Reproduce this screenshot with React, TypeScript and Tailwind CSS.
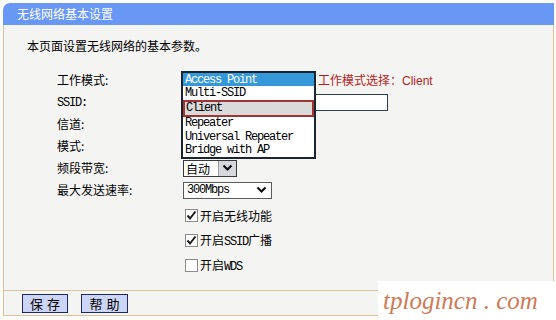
import React from "react";

const CJK = { fontFamily: '"Noto Sans CJK SC", "Liberation Sans", sans-serif' };
const MONO = { fontFamily: '"Liberation Mono", "Noto Sans CJK SC", monospace' };

function M({ children }: { children: React.ReactNode }) {
  return (
    <span className="text-[12px] tracking-[-1.2px]" style={MONO}>
      {children}
    </span>
  );
}

function Chevron() {
  return (
    <svg width="11" height="8" viewBox="0 0 11 8">
      <polyline points="1.5,1.5 5.5,5.5 9.5,1.5" fill="none" stroke="#111" strokeWidth="2.2" />
    </svg>
  );
}

function Check({ checked }: { checked: boolean }) {
  return (
    <div className="w-[13px] h-[13px] border border-[#8c8c8c] bg-white flex items-center justify-center">
      {checked && (
        <svg width="11" height="11" viewBox="0 0 11 11">
          <polyline points="1.5,5.5 4,8.5 9.5,1.5" fill="none" stroke="#1a1a1a" strokeWidth="2" />
        </svg>
      )}
    </div>
  );
}

function Row({ label, children }: { label: React.ReactNode; children?: React.ReactNode }) {
  return (
    <div className="h-[22px] flex items-center">
      <div className="w-[124px] text-[12px] leading-none text-black">{label}</div>
      <div className="flex items-center">{children}</div>
    </div>
  );
}

export default function App() {
  const items = ["Multi-SSID", "Client", "Repeater", "Universal Repeater", "Bridge with AP"];
  return (
    <div className="w-[556px] h-[320px] bg-[#fdfbf6] relative overflow-hidden" style={CJK}>
      <div className="ml-[3px] pt-[3px] w-[551px]">
        <div className="h-[22px] bg-[#6897f5] rounded-tl-[7px] text-white text-[12px] pl-[14px] flex items-center">
          无线网络基本设置
        </div>
        <div className="relative border-l border-r border-[#d9c29c] bg-[#f4f4f2] h-[265px]">
          <div className="pt-[12px] pl-[23px] h-[30px] flex items-center text-[12px] text-black">
            本页面设置无线网络的基本参数。
          </div>
          <div className="pt-[14px] pl-[53px]">
            <Row label="工作模式:">
              <div className="w-[137px]" />
              <span className="text-[12px] text-[#b81c1c]">
                工作模式选择：<span style={{ fontFamily: '"Liberation Sans", sans-serif' }}>Client</span>
              </span>
            </Row>
            <Row label={<M>SSID:</M>}>
              <div className="ml-[1px] w-[206px] h-[17px] border border-[#2e3d4c] bg-white" />
            </Row>
            <Row label="信道:" />
            <Row label="模式:" />
            <Row label="频段带宽:">
              <div className="ml-[2px] w-[54px] h-[17px] border border-[#3a3a3a] bg-white flex">
                <div className="flex-1 text-[12px] leading-[15px] pl-[2px]">自动</div>
                <div className="w-[18px] bg-[#d6d8dc] border-l border-[#9a9a9a] flex items-center justify-center">
                  <Chevron />
                </div>
              </div>
            </Row>
            <Row label="最大发送速率:">
              <div className="ml-[2px] w-[89px] h-[17px] border border-[#5a5a5a] bg-white flex items-center justify-between pl-[3px] pr-[4px]">
                <M>300Mbps</M>
                <Chevron />
              </div>
            </Row>
            <div className="mt-[2px] pl-[128px]">
              <div className="h-[25px] flex items-center gap-[2px] text-[12px]">
                <Check checked />
                <span>开启无线功能</span>
              </div>
              <div className="h-[25px] flex items-center gap-[2px] text-[12px]">
                <Check checked />
                <span>
                  开启<M>SSID</M>广播
                </span>
              </div>
              <div className="h-[25px] flex items-center gap-[2px] text-[12px]">
                <Check checked={false} />
                <span>
                  开启<M>WDS</M>
                </span>
              </div>
            </div>
          </div>

          <div className="absolute left-[177px] top-[46px] w-[135px] border-2 border-[#1b2530] bg-white text-black">
            <div className="h-[13px] bg-[#3598d8] text-white flex items-center pl-[2px] leading-none">
              <M>Access Point</M>
            </div>
            {items.map((it) =>
              it === "Client" ? (
                <div
                  key={it}
                  className="h-[17px] bg-[#dadada] border-2 border-[#a33232] flex items-center pl-[1px] leading-none"
                >
                  <M>{it}</M>
                </div>
              ) : (
                <div key={it} className="h-[13.5px] flex items-center pl-[2px] leading-none">
                  <M>{it}</M>
                </div>
              )
            )}
          </div>
        </div>
        <div className="h-[26px] border border-[#d9c29c] bg-[#f4f4f2] flex items-center pl-[18px] gap-[13px]">
          <button className="w-[46px] h-[19px] bg-[#cdd5f6] border border-[#1f2a58] text-[13px] leading-none tracking-[4px] pl-[4px] text-black">
            保存
          </button>
          <button className="w-[47px] h-[19px] bg-[#cdd5f6] border border-[#1f2a58] text-[13px] leading-none tracking-[4px] pl-[4px] text-black">
            帮助
          </button>
        </div>
      </div>
      <div className="absolute left-[378px] top-[281px] w-[178px] h-[39px] bg-white flex items-center pl-[5px]">
        <span
          className="italic whitespace-nowrap text-[25px] tracking-[0px] text-[#cf7a55]"
          style={{ fontFamily: '"Liberation Serif", "DejaVu Serif", serif' }}
        >
          tplogincn . com
        </span>
      </div>
    </div>
  );
}
